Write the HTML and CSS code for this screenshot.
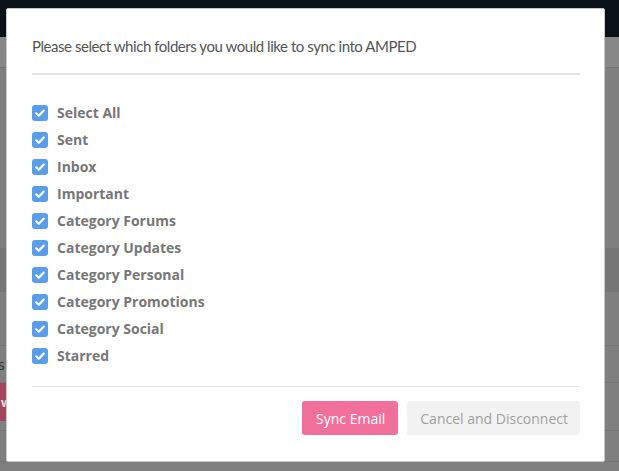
FILE: index.html
```html
<!DOCTYPE html>
<html>
<head>
    <title>Sync folders</title>
    <link rel="stylesheet" href="styles.css">
</head>
<body>
    <div class="page">
        <div class="navbar"></div>
        <div class="band band-light"></div>
        <div class="band band-plain"></div>
        <div class="band band-dark"></div>
        <div class="band band-tall"></div>
        <div class="band band-row"><span class="row-text">s</span></div>
        <div class="band band-pink"><span class="pink-tag">w</span></div>
        <div class="band band-last"></div>
    </div>

    <div class="modal">
        <div class="modal-header">
            <h4>Please select which folders you would like to sync into AMPED</h4>
        </div>
        <ul class="folder-list">
            <li><span class="check"><svg viewBox="0 0 16 16"><path d="M4.2 8.3l2.6 2.5 5-5.2" /></svg></span>Select All</li>
            <li><span class="check"><svg viewBox="0 0 16 16"><path d="M4.2 8.3l2.6 2.5 5-5.2" /></svg></span>Sent</li>
            <li><span class="check"><svg viewBox="0 0 16 16"><path d="M4.2 8.3l2.6 2.5 5-5.2" /></svg></span>Inbox</li>
            <li><span class="check"><svg viewBox="0 0 16 16"><path d="M4.2 8.3l2.6 2.5 5-5.2" /></svg></span>Important</li>
            <li><span class="check"><svg viewBox="0 0 16 16"><path d="M4.2 8.3l2.6 2.5 5-5.2" /></svg></span>Category Forums</li>
            <li><span class="check"><svg viewBox="0 0 16 16"><path d="M4.2 8.3l2.6 2.5 5-5.2" /></svg></span>Category Updates</li>
            <li><span class="check"><svg viewBox="0 0 16 16"><path d="M4.2 8.3l2.6 2.5 5-5.2" /></svg></span>Category Personal</li>
            <li><span class="check"><svg viewBox="0 0 16 16"><path d="M4.2 8.3l2.6 2.5 5-5.2" /></svg></span>Category Promotions</li>
            <li><span class="check"><svg viewBox="0 0 16 16"><path d="M4.2 8.3l2.6 2.5 5-5.2" /></svg></span>Category Social</li>
            <li><span class="check"><svg viewBox="0 0 16 16"><path d="M4.2 8.3l2.6 2.5 5-5.2" /></svg></span>Starred</li>
        </ul>
        <div class="modal-footer">
            <button class="btn btn-sync">Sync Email</button>
            <button class="btn btn-cancel">Cancel and Disconnect</button>
        </div>
    </div>
</body>
</html>
```

FILE: styles.css
```css
body {
    margin: 0;
    padding: 0;
    background-color: #7f7f7f;
    font-family: "Open Sans", Arial, sans-serif;
    overflow: hidden;
}

.page {
    display: flex;
    flex-direction: column;
    height: 471px;
}

.navbar {
    height: 37px;
    background-color: #0b1119;
}

.band {
    border-bottom: 1px solid #757575;
}

.band-light {
    height: 30px;
    background-color: #878787;
}

.band-plain {
    height: 180px;
}

.band-dark {
    height: 42px;
    background-color: #767676;
}

.band-tall {
    height: 53px;
}

.band-row {
    height: 36px;
    display: flex;
    align-items: center;
}

.band-pink {
    height: 47px;
}

.band-last {
    height: 30px;
}

.row-text {
    color: #333;
    font-size: 14px;
    margin-left: -2px;
}

.pink-tag {
    background-color: #a0465f;
    color: #ddd;
    font-size: 13px;
    font-weight: 700;
    height: 38px;
    width: 12px;
    display: flex;
    align-items: center;
    justify-content: flex-end;
    overflow: hidden;
}

.modal {
    position: absolute;
    top: 8px;
    left: 6px;
    width: 599px;
    height: 454px;
    background-color: #ffffff;
    border: 1px solid #c8c8c8;
    border-radius: 2px;
    padding: 0 24px 0 25px;
    box-sizing: border-box;
    display: flex;
    flex-direction: column;
}

.modal-header {
    padding-top: 27px;
    padding-bottom: 16px;
    border-bottom: 2px solid #e3e3e3;
}

.modal-header h4 {
    margin: 0;
    font-family: "Lato", "Open Sans", sans-serif;
    font-weight: 400;
    font-size: 15px;
    letter-spacing: -0.45px;
    line-height: 21px;
    color: #555;
}

.folder-list {
    list-style-type: none;
    margin: 0;
    padding: 24px 0 17px;
    border-bottom: 1px solid #e5e5e5;
}

.folder-list li {
    display: flex;
    align-items: center;
    height: 27px;
    font-size: 14px;
    font-weight: 700;
    color: #777;
}

.check {
    width: 16px;
    height: 16px;
    border-radius: 3px;
    background-color: #5a9de9;
    margin-right: 9px;
    display: flex;
}

.check svg {
    width: 16px;
    height: 16px;
    fill: none;
    stroke: #ffffff;
    stroke-width: 2.2;
    stroke-linecap: round;
    stroke-linejoin: round;
}

.modal-footer {
    display: flex;
    justify-content: flex-end;
    gap: 9px;
    padding-top: 14px;
}

.btn {
    font-family: "Open Sans", Arial, sans-serif;
    font-size: 14px;
    height: 34px;
    padding: 0 12px;
    border: none;
    border-radius: 3px;
}

.btn-sync {
    background-color: #f0709b;
    color: #ffffff;
    padding: 0 13px 0 14px;
}

.btn-cancel {
    background-color: #f2f2f2;
    color: #a0a0a0;
    padding: 0 12px 0 13px;
}
```
